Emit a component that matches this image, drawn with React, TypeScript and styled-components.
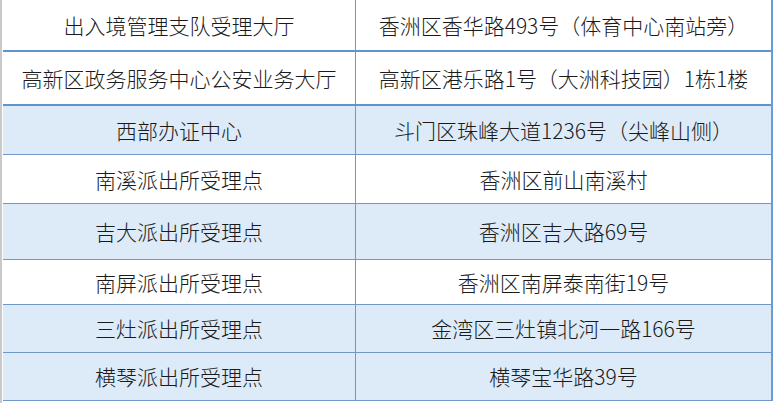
import React from 'react';
import styled, { createGlobalStyle } from 'styled-components';

const GlobalStyle = createGlobalStyle`
  html, body {
    margin: 0;
    padding: 0;
    background: #fff;
  }
  body {
    font-family: "Noto Sans CJK SC", "Microsoft YaHei", sans-serif;
    color: #1a1a1a;
  }
`;

const Page = styled.div`
  width: 773px;
  height: 403px;
  overflow: hidden;
  box-sizing: border-box;
  border-left: 2px solid #c9c9c9;
  padding-left: 1px;
`;

const Table = styled.div`
  width: 768px;
  display: flex;
  flex-direction: column;
  border-right: 2px solid #6a9bd3;
`;

const Row = styled.div<{ $tint: boolean; $h: number; $thick: boolean }>`
  display: grid;
  grid-template-columns: 353px 1fr;
  height: ${(p) => p.$h}px;
  background: ${(p) => (p.$tint ? '#ddeaf7' : '#ffffff')};
  border-bottom: ${(p) => (p.$thick ? 2 : 1)}px solid
    ${(p) => (p.$thick ? '#5b96d3' : '#6f98c8')};
`;

const Cell = styled.div<{ $first?: boolean }>`
  display: flex;
  align-items: center;
  justify-content: center;
  font-size: 21px;
  font-weight: 300;
  line-height: 1;
  white-space: nowrap;
  border-right: ${(p) => (p.$first ? '1px solid #6f98c8' : 'none')};
`;

const rows = [
  { name: '出入境管理支队受理大厅', addr: '香洲区香华路493号（体育中心南站旁）', tint: false, h: 50, thick: true },
  { name: '高新区政务服务中心公安业务大厅', addr: '高新区港乐路1号（大洲科技园）1栋1楼', tint: false, h: 52, thick: true },
  { name: '西部办证中心', addr: '斗门区珠峰大道1236号（尖峰山侧）', tint: true, h: 48, thick: false },
  { name: '南溪派出所受理点', addr: '香洲区前山南溪村', tint: false, h: 48, thick: false },
  { name: '吉大派出所受理点', addr: '香洲区吉大路69号', tint: true, h: 55, thick: false },
  { name: '南屏派出所受理点', addr: '香洲区南屏泰南街19号', tint: false, h: 44, thick: false },
  { name: '三灶派出所受理点', addr: '金湾区三灶镇北河一路166号', tint: true, h: 47, thick: false },
  { name: '横琴派出所受理点', addr: '横琴宝华路39号', tint: true, h: 47, thick: false },
];

const App: React.FC = () => {
  return (
    <>
      <GlobalStyle />
      <Page>
        <Table>
          {rows.map((r) => (
            <Row key={r.name} $tint={r.tint} $h={r.h} $thick={r.thick}>
              <Cell $first>{r.name}</Cell>
              <Cell>{r.addr}</Cell>
            </Row>
          ))}
        </Table>
      </Page>
    </>
  );
};

export default App;
